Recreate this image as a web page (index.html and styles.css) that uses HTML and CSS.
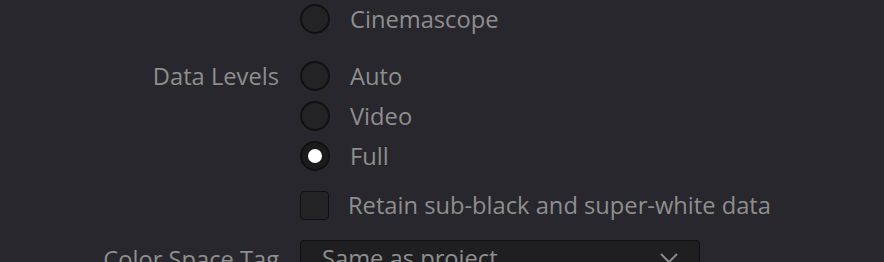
FILE: index.html
```html
<!DOCTYPE html>
<html lang="en">
<head>
  <meta charset="UTF-8" />
  <title>Clip Attributes</title>
  <link rel="stylesheet" href="styles.css">
</head>
<body>

<div class="panel">
  <!-- tail of the previous group -->
  <div class="field">
    <div class="field-label"></div>
    <div class="options">
      <label class="option"><span class="radio"></span>Cinemascope</label>
    </div>
  </div>

  <!-- Data levels -->
  <div class="field">
    <div class="field-label">Data Levels</div>
    <div class="options">
      <label class="option"><span class="radio"></span>Auto</label>
      <label class="option"><span class="radio"></span>Video</label>
      <label class="option"><span class="radio checked"></span>Full</label>
      <label class="option check-row"><span class="checkbox"></span>Retain sub-black and super-white data</label>
    </div>
  </div>

  <!-- Color space -->
  <div class="field field-select">
    <div class="field-label">Color Space Tag</div>
    <div class="options">
      <div class="select">
        <span>Same as project</span>
        <svg class="chevron" width="20" height="12" viewBox="0 0 20 12">
          <path d="M2 2 L10 10 L18 2" fill="none" stroke="#8a8a8a" stroke-width="2"/>
        </svg>
      </div>
    </div>
  </div>
</div>

</body>
</html>
```

FILE: styles.css
```css
body {
  margin: 0;
  background-color: #28272d;
  color: #8e8e8e;
  font-family: "Open Sans", "Noto Sans", sans-serif;
  font-size: 23.7px;
  overflow: hidden;
}

.panel {
  display: flex;
  flex-direction: column;
  gap: 17px;
  margin-top: -1px;
}

.field {
  display: grid;
  grid-template-columns: 280px 1fr;
  column-gap: 20px;
}

.field-label {
  text-align: right;
  line-height: 40px;
  height: 40px;
  padding-right: 1px;
  white-space: nowrap;
}

.options {
  display: flex;
  flex-direction: column;
  align-items: flex-start;
}

.option {
  height: 40px;
  display: flex;
  align-items: center;
  gap: 20px;
  line-height: 40px;
  white-space: nowrap;
}

.radio {
  width: 26px;
  height: 26px;
  border: 2px solid #111113;
  border-radius: 50%;
  background-color: #232325;
  position: relative;
  flex-shrink: 0;
}

.radio.checked {
  background-color: #1b1b1c;
}

.radio.checked::after {
  content: "";
  position: absolute;
  left: 6px;
  top: 6px;
  width: 14px;
  height: 14px;
  border-radius: 50%;
  background-color: #ffffff;
}

.check-row {
  margin-top: 9px;
}

.checkbox {
  width: 27px;
  height: 27px;
  border: 1px solid #111113;
  border-radius: 4px;
  background-color: #232325;
  flex-shrink: 0;
  margin-right: -1px;
}

.field-select {
  margin-top: -2px;
}

.field-select .field-label {
  line-height: 36px;
  padding-top: 1px;
}

.select {
  width: 400px;
  height: 36px;
  box-sizing: border-box;
  border: 1px solid #0f0f10;
  border-radius: 4px;
  background-color: #1f1f21;
  display: flex;
  align-items: center;
  justify-content: space-between;
  padding: 0 20px 0 21px;
  line-height: 36px;
  white-space: nowrap;
}

.chevron {
  display: block;
}
```
